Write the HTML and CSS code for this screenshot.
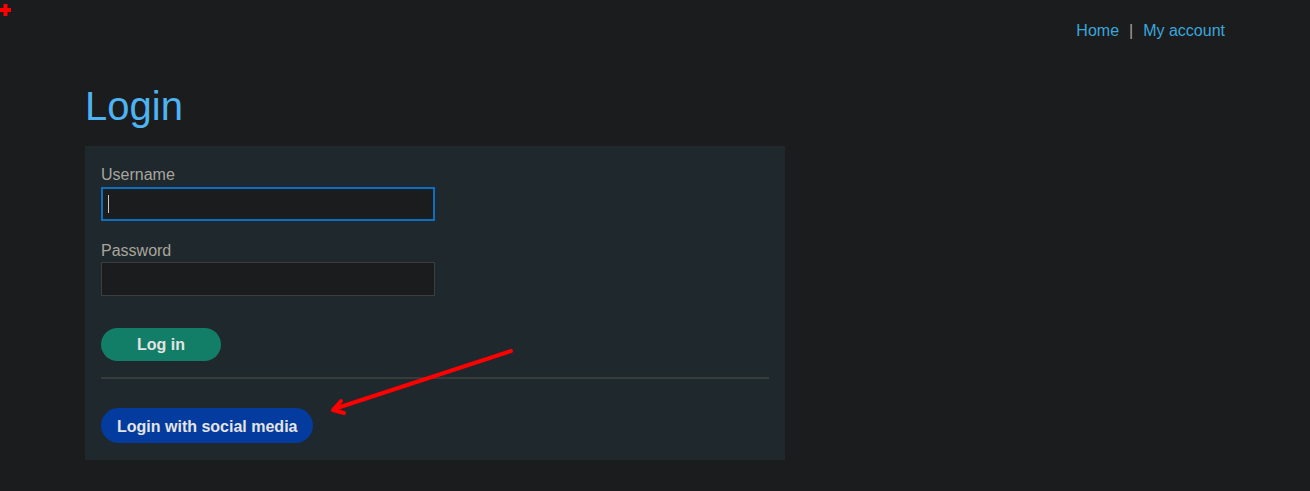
FILE: index.html
```html
<!DOCTYPE html>
<html lang="en">
<head>
<meta charset="utf-8">
<title>Login</title>
<link rel="stylesheet" href="styles.css">
</head>
<body>
<svg class="marker" width="14" height="20" viewBox="0 0 14 20"><path d="M0 8h11v4H0zM3.5 4h4v12h-4z" fill="#ff0000"/></svg>
<header class="topnav">
  <a href="#">Home</a><span class="sep">|</span><a href="#">My account</a>
</header>
<main class="content">
  <h1 class="title">Login</h1>
  <section class="panel">
    <form class="form">
      <label class="label first" for="u">Username</label>
      <div class="field">
        <input id="u" class="input focused" type="text">
        <span class="caret"></span>
      </div>
      <label class="label second" for="p">Password</label>
      <input id="p" class="input" type="password">
      <button class="btn btn-login" type="button">Log in</button>
      <hr class="divider">
      <button class="btn btn-social" type="button">Login with social media</button>
    </form>
  </section>
</main>
<svg class="arrow" width="1310" height="491" viewBox="0 0 1310 491">
  <g stroke="#ff0000" stroke-width="4" stroke-linecap="round" stroke-linejoin="round" fill="none">
    <path d="M511 351 L334 409"/>
    <path d="M341 401 L333 410 L344 413"/>
  </g>
</svg>
</body>
</html>
```
FILE: styles.css
```css
html, body {
  margin: 0;
  padding: 0;
}
body {
  background: #1b1c1e;
  font-family: "Liberation Sans", Arial, sans-serif;
  font-size: 16px;
  color: #a9a59d;
  width: 1310px;
  height: 491px;
  position: relative;
  overflow: hidden;
}
.marker {
  position: absolute;
  left: 0;
  top: 0;
}
.arrow {
  position: absolute;
  left: 0;
  top: 0;
  pointer-events: none;
}
.topnav {
  display: flex;
  justify-content: flex-end;
  align-items: center;
  padding: 21px 85px 0 0;
  height: 20px;
  line-height: 20px;
}
.topnav a {
  color: #3aa7da;
  text-decoration: none;
}
.topnav .sep {
  color: #a9a59d;
  margin: 0 10px;
}
.content {
  padding: 0 85px;
}
.title {
  margin: 42px 0 17px;
  font-size: 40px;
  line-height: 46px;
  font-weight: 400;
  color: #4eb3f3;
}
.panel {
  width: 700px;
  box-sizing: border-box;
  background: #1f282d;
  padding: 16px 16px 17px;
}
.form {
  display: flex;
  flex-direction: column;
  align-items: flex-start;
}
.label {
  display: block;
  padding-top: 2px;
  line-height: 22px;
  color: #a9a59d;
}
.label.first {
  margin-bottom: 1px;
}
.label.second {
  margin-top: 17px;
}
.field {
  position: relative;
}
.input {
  display: block;
  width: 334px;
  height: 34px;
  box-sizing: border-box;
  margin: 0;
  background: #1b1c1e;
  border: 1px solid #3b3d3e;
  color: #ddd;
  font: inherit;
  outline: none;
}
.input.focused {
  border: 2px solid #0c6fc0;
}
.caret {
  position: absolute;
  left: 7px;
  top: 8px;
  width: 1px;
  height: 18px;
  background: #c9c9c9;
}
.btn {
  border: 0;
  font-family: inherit;
  font-size: 16px;
  font-weight: 700;
  color: #e4e4e4;
  border-radius: 17px;
  margin: 0;
  cursor: pointer;
  box-sizing: border-box;
}
.btn-login {
  margin-top: 32px;
  width: 120px;
  height: 33px;
  background: #127e67;
}
.divider {
  align-self: stretch;
  margin: 16px 0 29px;
  border: 0;
  height: 2px;
  background: #363b3b;
}
.btn-social {
  height: 35px;
  padding: 2px 16px 0;
  background: #033b9e;
  border-radius: 18px;
}
```
